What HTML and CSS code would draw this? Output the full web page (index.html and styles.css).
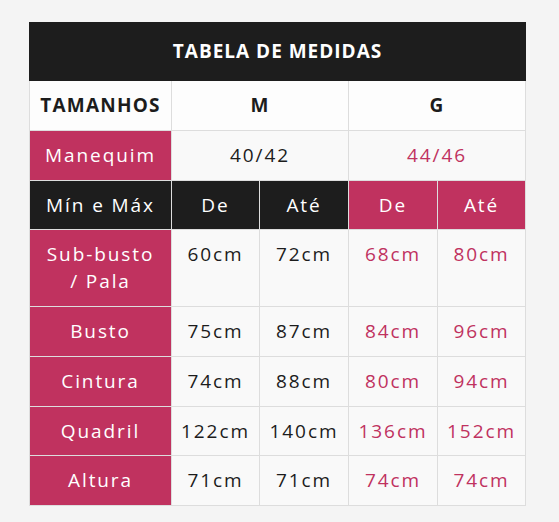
FILE: index.html
```html
<!DOCTYPE html>
<html lang="pt">
<head>
<meta charset="utf-8">
<title>Tabela de Medidas</title>
<link rel="stylesheet" href="styles.css">
</head>
<body>
<div class="wrap">
<table class="sizes">
  <colgroup>
    <col class="c1"><col class="c2"><col class="c3"><col class="c4"><col class="c5">
  </colgroup>
  <thead>
    <tr><th colspan="5" class="title">TABELA DE MEDIDAS</th></tr>
  </thead>
  <tbody>
    <tr class="head">
      <td class="bold">TAMANHOS</td>
      <td colspan="2" class="bold">M</td>
      <td colspan="2" class="bold">G</td>
    </tr>
    <tr>
      <td class="pink">Manequim</td>
      <td colspan="2">40/42</td>
      <td colspan="2" class="ptext">44/46</td>
    </tr>
    <tr>
      <td class="dark">Mín e Máx</td>
      <td class="dark">De</td>
      <td class="dark">Até</td>
      <td class="pink">De</td>
      <td class="pink">Até</td>
    </tr>
    <tr>
      <td class="pink">Sub-busto<br>/ Pala</td>
      <td>60cm</td><td>72cm</td><td class="ptext">68cm</td><td class="ptext">80cm</td>
    </tr>
    <tr>
      <td class="pink">Busto</td>
      <td>75cm</td><td>87cm</td><td class="ptext">84cm</td><td class="ptext">96cm</td>
    </tr>
    <tr>
      <td class="pink">Cintura</td>
      <td>74cm</td><td>88cm</td><td class="ptext">80cm</td><td class="ptext">94cm</td>
    </tr>
    <tr>
      <td class="pink">Quadril</td>
      <td>122cm</td><td>140cm</td><td class="ptext">136cm</td><td class="ptext">152cm</td>
    </tr>
    <tr>
      <td class="pink">Altura</td>
      <td>71cm</td><td>71cm</td><td class="ptext">74cm</td><td class="ptext">74cm</td>
    </tr>
  </tbody>
</table>
</div>
</body>
</html>
```

FILE: styles.css
```css
html, body {
  margin: 0;
  padding: 0;
  background: #f4f4f4;
}
.wrap {
  padding: 22px 0 0 29px;
}
.sizes {
  border-collapse: collapse;
  table-layout: fixed;
  width: 497px;
  font-family: "Open Sans", "DejaVu Sans", sans-serif;
  font-size: 19px;
  letter-spacing: 1.9px;
  color: #1c1c1c;
}
.c1 { width: 142px; }
.c2 { width: 88px; }
.c3 { width: 89px; }
.c4 { width: 89px; }
.c5 { width: 88px; }
.sizes td, .sizes th {
  border: 1px solid #dddddd;
  background: #f9f9f9;
  text-align: center;
  vertical-align: top;
  padding: 11px 0 10.75px;
  line-height: 27px;
  font-weight: 400;
  white-space: nowrap;
}
.sizes th.title {
  background: #1d1d1d;
  border-color: #1d1d1d;
  color: #ffffff;
  font-weight: 700;
  letter-spacing: 1px;
  padding: 15px 0 15px;
}
.sizes .head td {
  background: #fdfdfd;
}
.sizes td.bold {
  font-weight: 700;
  letter-spacing: 1.2px;
}
.sizes td.pink {
  background: #c0325f;
  color: #ffffff;
}
.sizes td.dark {
  background: #1d1d1d;
  color: #ffffff;
}
.sizes td.ptext {
  color: #c0325f;
}
```
